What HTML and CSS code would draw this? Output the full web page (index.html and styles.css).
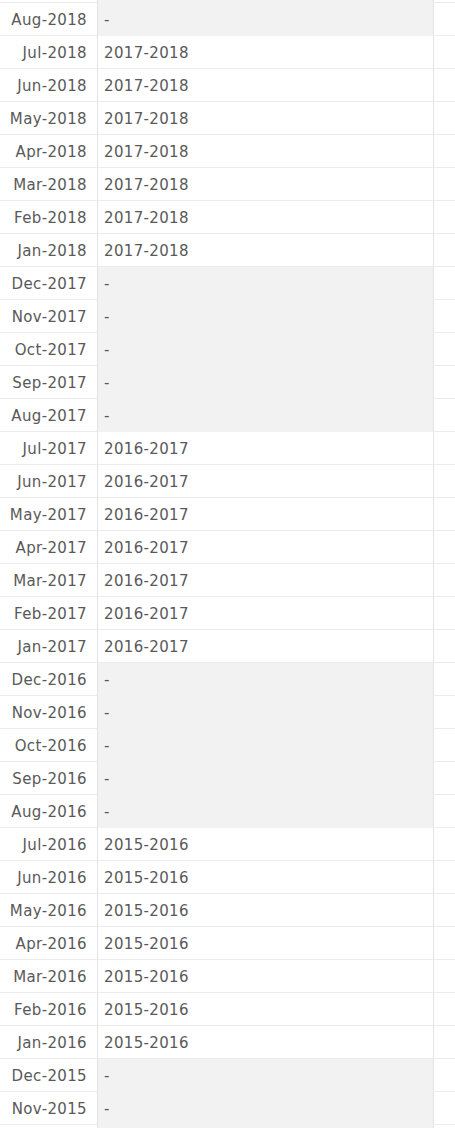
FILE: index.html
```html
<!DOCTYPE html>
<html>
<head>
<meta charset="utf-8">
<link rel="stylesheet" href="styles.css">
</head>
<body>
<div class="table">
  <div class="row top empty"><div class="c1"></div><div class="c2"></div><div class="c3"></div></div>
  <div class="row empty"><div class="c1">Aug-2018</div><div class="c2">-</div><div class="c3"></div></div>
  <div class="row"><div class="c1">Jul-2018</div><div class="c2">2017-2018</div><div class="c3"></div></div>
  <div class="row"><div class="c1">Jun-2018</div><div class="c2">2017-2018</div><div class="c3"></div></div>
  <div class="row"><div class="c1">May-2018</div><div class="c2">2017-2018</div><div class="c3"></div></div>
  <div class="row"><div class="c1">Apr-2018</div><div class="c2">2017-2018</div><div class="c3"></div></div>
  <div class="row"><div class="c1">Mar-2018</div><div class="c2">2017-2018</div><div class="c3"></div></div>
  <div class="row"><div class="c1">Feb-2018</div><div class="c2">2017-2018</div><div class="c3"></div></div>
  <div class="row"><div class="c1">Jan-2018</div><div class="c2">2017-2018</div><div class="c3"></div></div>
  <div class="row empty"><div class="c1">Dec-2017</div><div class="c2">-</div><div class="c3"></div></div>
  <div class="row empty"><div class="c1">Nov-2017</div><div class="c2">-</div><div class="c3"></div></div>
  <div class="row empty"><div class="c1">Oct-2017</div><div class="c2">-</div><div class="c3"></div></div>
  <div class="row empty"><div class="c1">Sep-2017</div><div class="c2">-</div><div class="c3"></div></div>
  <div class="row empty"><div class="c1">Aug-2017</div><div class="c2">-</div><div class="c3"></div></div>
  <div class="row"><div class="c1">Jul-2017</div><div class="c2">2016-2017</div><div class="c3"></div></div>
  <div class="row"><div class="c1">Jun-2017</div><div class="c2">2016-2017</div><div class="c3"></div></div>
  <div class="row"><div class="c1">May-2017</div><div class="c2">2016-2017</div><div class="c3"></div></div>
  <div class="row"><div class="c1">Apr-2017</div><div class="c2">2016-2017</div><div class="c3"></div></div>
  <div class="row"><div class="c1">Mar-2017</div><div class="c2">2016-2017</div><div class="c3"></div></div>
  <div class="row"><div class="c1">Feb-2017</div><div class="c2">2016-2017</div><div class="c3"></div></div>
  <div class="row"><div class="c1">Jan-2017</div><div class="c2">2016-2017</div><div class="c3"></div></div>
  <div class="row empty"><div class="c1">Dec-2016</div><div class="c2">-</div><div class="c3"></div></div>
  <div class="row empty"><div class="c1">Nov-2016</div><div class="c2">-</div><div class="c3"></div></div>
  <div class="row empty"><div class="c1">Oct-2016</div><div class="c2">-</div><div class="c3"></div></div>
  <div class="row empty"><div class="c1">Sep-2016</div><div class="c2">-</div><div class="c3"></div></div>
  <div class="row empty"><div class="c1">Aug-2016</div><div class="c2">-</div><div class="c3"></div></div>
  <div class="row"><div class="c1">Jul-2016</div><div class="c2">2015-2016</div><div class="c3"></div></div>
  <div class="row"><div class="c1">Jun-2016</div><div class="c2">2015-2016</div><div class="c3"></div></div>
  <div class="row"><div class="c1">May-2016</div><div class="c2">2015-2016</div><div class="c3"></div></div>
  <div class="row"><div class="c1">Apr-2016</div><div class="c2">2015-2016</div><div class="c3"></div></div>
  <div class="row"><div class="c1">Mar-2016</div><div class="c2">2015-2016</div><div class="c3"></div></div>
  <div class="row"><div class="c1">Feb-2016</div><div class="c2">2015-2016</div><div class="c3"></div></div>
  <div class="row"><div class="c1">Jan-2016</div><div class="c2">2015-2016</div><div class="c3"></div></div>
  <div class="row empty"><div class="c1">Dec-2015</div><div class="c2">-</div><div class="c3"></div></div>
  <div class="row empty"><div class="c1">Nov-2015</div><div class="c2">-</div><div class="c3"></div></div>
  <div class="row empty"><div class="c1"></div><div class="c2"></div><div class="c3"></div></div>
</div>
</body>
</html>
```
FILE: styles.css
```css
html, body {
  margin: 0;
  padding: 0;
  background: #ffffff;
  overflow: hidden;
}

.table {
  font-family: "DejaVu Sans", sans-serif;
  font-size: 15px;
  letter-spacing: 0.35px;
  color: #595959;
}

.row {
  display: grid;
  grid-template-columns: 98px 336px 1fr;
  height: 33px;
}

.row.top {
  height: 3px;
}

.c1, .c2, .c3 {
  box-sizing: border-box;
  height: 100%;
  border-bottom: 1px solid #ececec;
  display: flex;
  align-items: center;
  padding-top: 2px;
}

.top .c1, .top .c2, .top .c3 {
  padding-top: 0;
}

.c1 {
  justify-content: flex-end;
  padding-right: 10px;
  border-right: 1px solid #e3e3e3;
}

.c2 {
  padding-left: 6px;
  border-right: 1px solid #e3e3e3;
}

.empty .c2 {
  background: #f2f2f2;
  border-bottom-color: #f2f2f2;
}
```
